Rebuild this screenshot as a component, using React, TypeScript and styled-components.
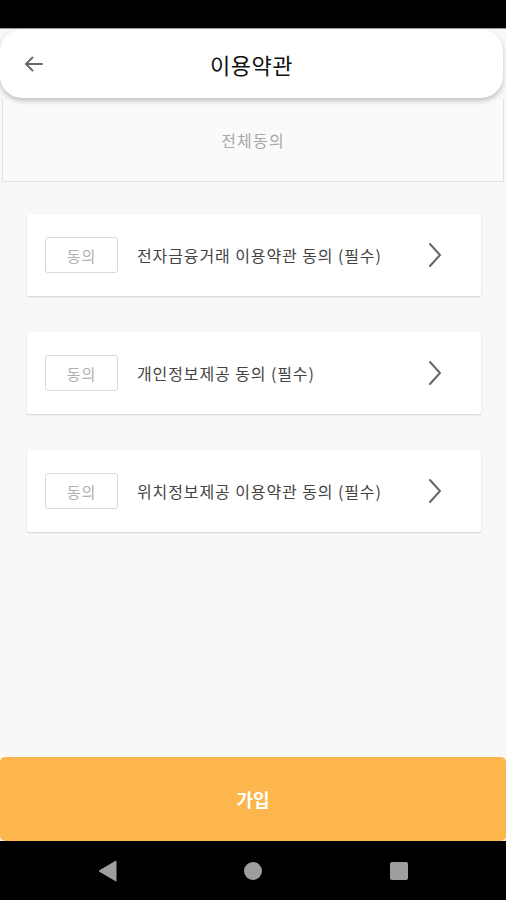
import React from 'react';
import styled, { createGlobalStyle } from 'styled-components';

const GlobalStyle = createGlobalStyle`
  html, body {
    margin: 0;
    padding: 0;
    background: #000;
  }
  * {
    box-sizing: border-box;
  }
`;

const Screen = styled.div`
  width: 506px;
  height: 900px;
  display: flex;
  flex-direction: column;
  background: #f8f8f8;
  font-family: 'Noto Sans CJK KR', 'Noto Sans', sans-serif;
  overflow: hidden;
`;

const StatusBar = styled.div`
  height: 29px;
  background: #000;
  border-bottom: 1px solid #9a9a9a;
  flex-shrink: 0;
`;

const Header = styled.header`
  position: relative;
  z-index: 2;
  height: 69px;
  margin-right: 3px;
  background: #fff;
  border-radius: 22px;
  box-shadow: 0 3px 5px rgba(0, 0, 0, 0.22);
  display: flex;
  align-items: center;
  justify-content: center;
  flex-shrink: 0;
`;

const BackButton = styled.button`
  position: absolute;
  left: 22px;
  top: 50%;
  transform: translateY(-50%);
  background: none;
  border: none;
  padding: 0;
  display: flex;
  cursor: pointer;
`;

const Title = styled.h1`
  margin: 0;
  font-size: 22px;
  font-weight: 400;
  letter-spacing: 0.5px;
  color: #111;
`;

const AllAgree = styled.div`
  height: 83px;
  margin: 1px 2px 0;
  background: #fafafa;
  border: 1px solid #e2e2e2;
  border-top: none;
  display: flex;
  align-items: center;
  justify-content: center;
  font-size: 16px;
  letter-spacing: 1.2px;
  color: #a8a8a8;
  flex-shrink: 0;
`;

const List = styled.div`
  flex: 1;
  display: flex;
  flex-direction: column;
  gap: 36px;
  padding: 32px 25px 0 27px;
`;

const Card = styled.div`
  height: 82px;
  background: #fff;
  border-radius: 2px;
  box-shadow: 0 1px 2px rgba(0, 0, 0, 0.16);
  display: flex;
  align-items: center;
  padding: 0 38px 0 18px;
`;

const AgreeButton = styled.button`
  width: 73px;
  height: 36px;
  border: 1px solid #d9d9d9;
  border-radius: 3px;
  background: #fff;
  color: #b0b0b0;
  font-family: inherit;
  font-size: 15px;
  letter-spacing: 1px;
  padding: 0;
  flex-shrink: 0;
`;

const Label = styled.span`
  flex: 1;
  margin-left: 19px;
  font-size: 16px;
  letter-spacing: 0.9px;
  color: #444;
`;

const Chevron = styled.span`
  display: flex;
`;

const Footer = styled.button`
  height: 84px;
  margin: 0;
  border: none;
  border-radius: 5px;
  background: #fdb64b;
  color: #fff;
  font-family: inherit;
  font-size: 18px;
  font-weight: 700;
  flex-shrink: 0;
`;

const NavBar = styled.nav`
  height: 59px;
  background: #000;
  display: flex;
  align-items: center;
  justify-content: center;
  gap: 126px;
  flex-shrink: 0;
`;

const NavIcon = styled.span`
  display: flex;
  width: 20px;
  justify-content: center;
`;

const terms = [
  '전자금융거래 이용약관 동의 (필수)',
  '개인정보제공 동의 (필수)',
  '위치정보제공 이용약관 동의 (필수)',
];

const App = () => {
  return (
    <>
      <GlobalStyle />
      <Screen>
        <StatusBar />
        <Header>
          <BackButton aria-label="back">
            <svg width="24" height="24" viewBox="0 0 24 24" fill="none" stroke="#666" strokeWidth="1.8" strokeLinecap="round" strokeLinejoin="round">
              <path d="M20 12H4" />
              <path d="M10.5 5.5L4 12l6.5 6.5" />
            </svg>
          </BackButton>
          <Title>이용약관</Title>
        </Header>
        <AllAgree>전체동의</AllAgree>
        <List>
          {terms.map((t) => (
            <Card key={t}>
              <AgreeButton>동의</AgreeButton>
              <Label>{t}</Label>
              <Chevron>
                <svg width="16" height="26" viewBox="0 0 16 26" fill="none" stroke="#666" strokeWidth="2" strokeLinecap="round">
                  <path d="M3 2l10 11L3 24" />
                </svg>
              </Chevron>
            </Card>
          ))}
        </List>
        <Footer>가입</Footer>
        <NavBar>
          <NavIcon>
            <svg width="19" height="22" viewBox="0 0 19 22">
              <path d="M18 1v20L1 11z" fill="#9e9e9e" stroke="#9e9e9e" strokeLinejoin="round" />
            </svg>
          </NavIcon>
          <NavIcon>
            <svg width="20" height="20" viewBox="0 0 20 20">
              <circle cx="10" cy="10" r="9" fill="#9e9e9e" />
            </svg>
          </NavIcon>
          <NavIcon>
            <svg width="20" height="20" viewBox="0 0 20 20">
              <rect x="1" y="1" width="18" height="18" rx="2" fill="#9e9e9e" />
            </svg>
          </NavIcon>
        </NavBar>
      </Screen>
    </>
  );
};

export default App;
